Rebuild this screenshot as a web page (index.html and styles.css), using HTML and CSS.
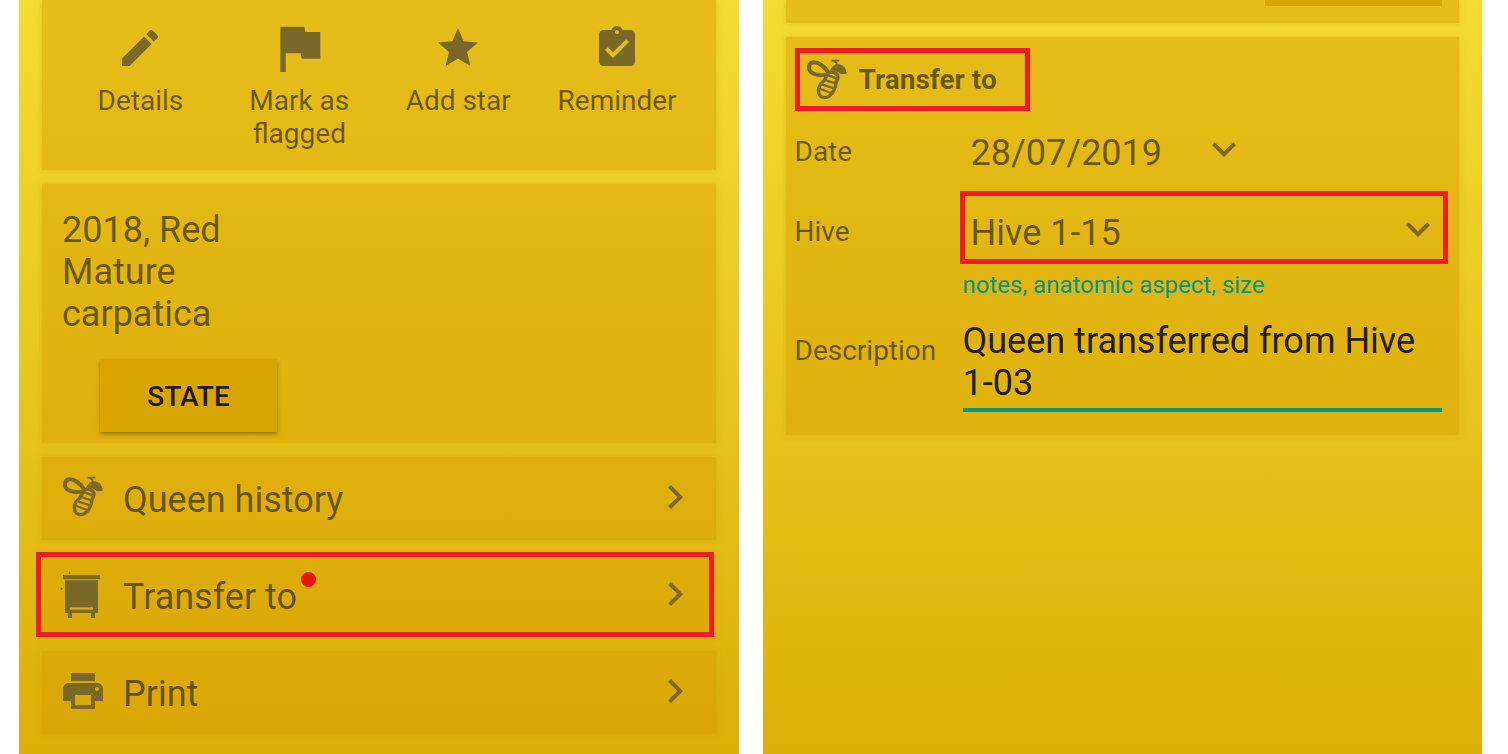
FILE: index.html
```
<!DOCTYPE html>
<html lang="en">
<head>
    <meta charset="UTF-8">
    <meta name="viewport" content="width=device-width, initial-scale=1.0">
    <title>Queen - Transfer to</title>
    <link rel="stylesheet" href="styles.css">
</head>
<body>
    <!-- Shared icons -->
    <svg class="icon-defs" aria-hidden="true">
        <symbol id="bee" viewBox="0 -4 144 144">
            <g fill="none" stroke="currentColor" stroke-linecap="round" stroke-linejoin="round">
                <path stroke-width="12" d="M76 46C65 27 46 14 31 15C16 17 13 36 25 45C37 54 56 54 72 52"/>
                <path stroke-width="10" d="M69 60C72 47 83 42 93 45C106 50 109 62 100 72C98 90 91 107 79 116C67 125 50 121 47 107C44 92 51 80 62 71Z"/>
                <path stroke-width="7" d="M76 54L101 63M65 68L98 78M57 81L92 93M52 95L85 107"/>
            </g>
            <path fill="currentColor" d="M81 40C86 28 96 20 108 21C121 23 131 34 131 50H112C104 42 94 38 81 40Z"/>
            <path fill="none" stroke="currentColor" stroke-width="5" d="M86 10H109M92 11L101 17L99 27"/>
        </symbol>
        <symbol id="chevron-right" viewBox="0 0 24 24">
            <path d="M10 6L8.59 7.41 13.17 12l-4.58 4.59L10 18l6-6z"/>
        </symbol>
        <symbol id="chevron-down" viewBox="0 0 24 24">
            <path d="M16.59 8.59L12 13.17 7.41 8.59 6 10l6 6 6-6z"/>
        </symbol>
    </svg>

    <main class="screens">
        <section class="screen">
            <div class="card actions">
                <button type="button" class="action">
                    <svg class="icon" viewBox="0 0 24 24"><path d="M3 17.25V21h3.75L17.81 9.94l-3.75-3.75L3 17.25zM20.71 7.04c.39-.39.39-1.02 0-1.41l-2.34-2.34c-.39-.39-1.02-.39-1.41 0l-1.83 1.83 3.75 3.75 1.83-1.83z"/></svg>
                    Details
                </button>
                <button type="button" class="action">
                    <svg class="icon icon-large" viewBox="0 0 24 24"><path d="M14.4 6L14 4H5v17h2v-7h5.6l.4 2h7V6z"/></svg>
                    Mark as flagged
                </button>
                <button type="button" class="action">
                    <svg class="icon" viewBox="0 0 24 24"><path d="M12 17.27L18.18 21l-1.64-7.03L22 9.24l-7.19-.61L12 2 9.19 8.63 2 9.24l5.46 4.73L5.82 21z"/></svg>
                    Add star
                </button>
                <button type="button" class="action">
                    <svg class="icon" viewBox="0 0 24 24"><path d="M19 3h-4.18C14.4 1.84 13.3 1 12 1c-1.3 0-2.4.84-2.82 2H5c-1.1 0-2 .9-2 2v14c0 1.1.9 2 2 2h14c1.1 0 2-.9 2-2V5c0-1.1-.9-2-2-2zm-7 0c.55 0 1 .45 1 1s-.45 1-1 1-1-.45-1-1 .45-1 1-1zm-2 14l-4-4 1.41-1.41L10 14.17l6.59-6.59L18 9l-8 8z"/></svg>
                    Reminder
                </button>
            </div>

            <div class="card queen">
                <p>2018, Red</p>
                <p>Mature</p>
                <p>carpatica</p>
                <button type="button" class="raised-button">STATE</button>
            </div>

            <button type="button" class="card menu-row">
                <svg class="icon"><use href="#bee"/></svg>
                <span class="menu-label">Queen history</span>
                <svg class="icon chevron"><use href="#chevron-right"/></svg>
            </button>

            <button type="button" class="card menu-row highlighted">
                <svg class="icon" viewBox="0 -4 144 144">
                    <path d="M12 11h111v13H12zM18 27h99v98H18zM27 125h12v16H27zM96 125h12v16H96zM28 7l3-9 4 9zM5 47l7 6-7 4z"/>
                    <path class="hive-slot" d="M33 108h69v7H33z"/>
                </svg>
                <span class="menu-label">Transfer to<span class="dot"></span></span>
                <svg class="icon chevron"><use href="#chevron-right"/></svg>
            </button>

            <button type="button" class="card menu-row">
                <svg class="icon" viewBox="0 0 24 24"><path d="M19 8H5c-1.66 0-3 1.34-3 3v6h4v4h12v-4h4v-6c0-1.66-1.34-3-3-3zm-3 11H8v-5h8v5zm3-7c-.55 0-1-.45-1-1s.45-1 1-1 1 .45 1 1-.45 1-1 1zm-1-9H6v4h12V3z"/></svg>
                <span class="menu-label">Print</span>
                <svg class="icon chevron"><use href="#chevron-right"/></svg>
            </button>
        </section>

        <section class="screen">
            <div class="card scrolled-card">
                <button type="button" class="raised-button" aria-label="State"></button>
            </div>

            <form class="card transfer-form">
                <h2 class="form-title">
                    <svg class="icon"><use href="#bee"/></svg>
                    Transfer to
                </h2>

                <div class="form-row">
                    <label for="date">Date</label>
                    <div class="dropdown dropdown-date">
                        <select id="date" name="date">
                            <option>28/07/2019</option>
                        </select>
                        <svg class="icon dropdown-arrow"><use href="#chevron-down"/></svg>
                    </div>
                </div>

                <div class="form-row">
                    <label for="hive">Hive</label>
                    <div class="dropdown highlighted">
                        <select id="hive" name="hive">
                            <option>Hive 1-15</option>
                        </select>
                        <svg class="icon dropdown-arrow"><use href="#chevron-down"/></svg>
                    </div>
                </div>

                <div class="form-row description-row">
                    <label for="description">Description</label>
                    <div class="description-field">
                        <p class="hint">notes, anatomic aspect, size</p>
                        <textarea id="description" name="description" rows="2" spellcheck="false">Queen transferred from Hive 1-03</textarea>
                    </div>
                </div>
            </form>
        </section>
    </main>
</body>
</html>
```
FILE: styles.css
```
* {
    box-sizing: border-box;
}

body {
    margin: 0;
    background-color: #fff;
    font-family: Roboto, sans-serif;
    font-size: 28px;
    line-height: 33px;
    color: rgba(0, 0, 0, 0.54);
}

h2, p {
    margin: 0;
}

button, select, textarea {
    font: inherit;
    color: inherit;
    border: none;
    border-radius: 0;
    padding: 0;
    margin: 0;
    background: none;
}

button, select {
    cursor: pointer;
}

.icon-defs {
    display: none;
}

.screens {
    display: grid;
    grid-template-columns: 1fr 1fr;
    gap: 24px;
    min-height: 100vh;
    padding: 0 26px 0 19px;
}

.screen {
    display: flex;
    flex-direction: column;
    gap: 14px;
    padding: 0 23px 20px;
    background: linear-gradient(#f4dd32, #dcae08);
    overflow: hidden;
}

/* Cards have a soft edge in their own colour */
.card {
    background-color: rgba(216, 160, 0, 0.5);
    box-shadow: 0 0 5px rgba(216, 160, 0, 0.5);
}

.icon {
    width: 48px;
    height: 48px;
    flex-shrink: 0;
    fill: currentColor;
    color: #7a6828;
}

.icon-large {
    width: 64px;
    height: 64px;
    margin: -8px;
}

/* Top actions */
.actions {
    display: grid;
    grid-template-columns: repeat(4, minmax(0, 1fr));
    padding: 24px 19px 20px;
}

.action {
    display: flex;
    flex-direction: column;
    align-items: center;
    gap: 12px;
    padding: 0 16px;
}

/* Queen summary */
.queen {
    padding: 25px 20px 11px;
    font-size: 36px;
    line-height: 42px;
}

.raised-button {
    display: block;
    width: 177px;
    height: 73px;
    padding-top: 2px;
    background-color: #d8a400;
    box-shadow: 0 2px 4px rgba(0, 0, 0, 0.35);
    font-size: 28px;
    font-weight: 500;
    color: rgba(0, 0, 0, 0.87);
}

.queen .raised-button {
    margin: 24px 0 0 38px;
}

/* Menu */
.menu-row {
    position: relative;
    display: flex;
    align-items: center;
    gap: 16px;
    height: 83px;
    padding: 0 17px 3px;
    font-size: 36px;
    line-height: 42px;
    text-align: left;
}

.menu-label {
    position: relative;
    padding-top: 5px;
}

.chevron {
    margin-left: auto;
}

.hive-slot {
    fill: #dcae0c;
}

.dot {
    position: absolute;
    top: 1px;
    left: calc(100% + 4px);
    width: 15px;
    height: 15px;
    border-radius: 50%;
    background-color: #e8150b;
}

/* Red frame drawn over the item */
.highlighted::after {
    content: "";
    position: absolute;
    inset: -2px 2px 0 -6px;
    border: 5px solid #ee1c25;
    pointer-events: none;
}

/* Second screen */
.scrolled-card {
    display: flex;
    justify-content: flex-end;
    height: 23px;
    padding-right: 17px;
}

.scrolled-card .raised-button {
    margin-top: -67px;
    box-shadow: none;
}

.transfer-form {
    padding: 11px 17px 23px 9px;
}

.form-title {
    display: flex;
    align-items: center;
    gap: 8px;
    width: fit-content;
    height: 63px;
    padding: 0 28px 0 3px;
    border: 5px solid #ee1c25;
    font-size: 28px;
    font-weight: 700;
}

.form-row {
    display: grid;
    grid-template-columns: 168px 1fr;
    align-items: center;
    min-height: 80px;
}

.dropdown {
    position: relative;
    height: 68px;
}

.dropdown-date {
    width: 285px;
}

.dropdown.highlighted::after {
    inset: -6px -6px 1px -3px;
}

.dropdown select {
    appearance: none;
    width: 100%;
    height: 100%;
    padding: 4px 0 0 8px;
    font-size: 36px;
}

.dropdown-arrow {
    position: absolute;
    top: 8px;
    right: 0;
    pointer-events: none;
}

.description-row {
    align-items: start;
}

.description-row label {
    padding-top: 63px;
}

.hint {
    font-size: 24px;
    line-height: 28px;
    color: #009688;
}

.description-field textarea {
    display: block;
    width: 100%;
    margin-top: 21px;
    padding-bottom: 4px;
    border-bottom: 4px solid #009688;
    font-size: 36px;
    line-height: 42px;
    color: rgba(0, 0, 0, 0.87);
    resize: none;
    outline: none;
    overflow: hidden;
}
```
